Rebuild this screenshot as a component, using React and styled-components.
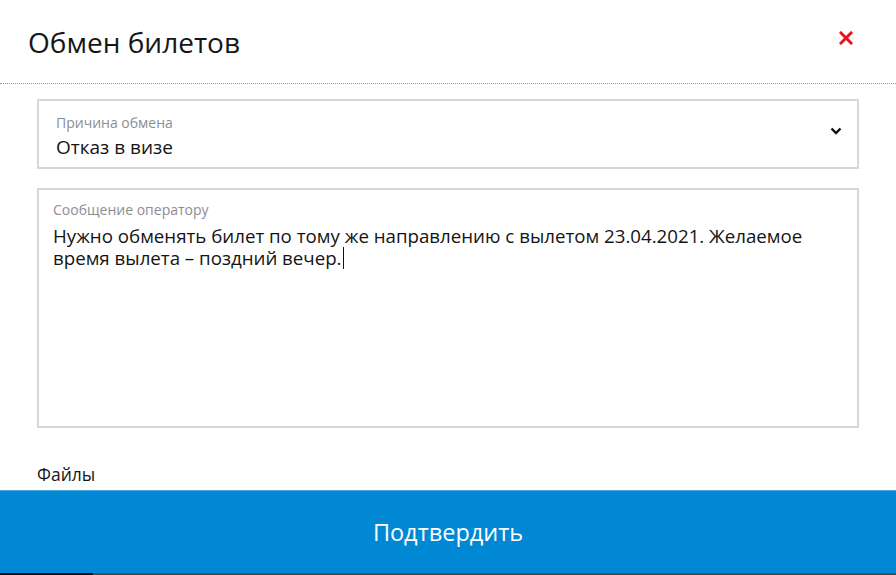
import React from "react";
import styled, { createGlobalStyle } from "styled-components";

const Global = createGlobalStyle`
  html, body { margin: 0; padding: 0; background: #fff; }
  body { font-family: "Open Sans", "Noto Sans", sans-serif; color: #111; }
  * { box-sizing: border-box; }
`;

const Page = styled.div`
  width: 896px;
  height: 575px;
  display: flex;
  flex-direction: column;
  overflow: hidden;
`;

const Header = styled.div`
  height: 85px;
  display: flex;
  align-items: center;
  justify-content: space-between;
  padding: 0 40px 0 28px;
  border-bottom: 1px dotted #9a9a9a;
`;

const Title = styled.h1`
  margin: 0;
  font-size: 28px;
  font-weight: 400;
  color: #161616;
  letter-spacing: 0;
`;

const CloseButton = styled.button`
  border: 0;
  background: none;
  padding: 0;
  width: 20px;
  height: 20px;
  margin-bottom: 8px;
  display: flex;
  align-items: center;
  justify-content: center;
  cursor: pointer;
`;

const Body = styled.div`
  flex: 1;
  padding: 15px 37px 0;
  display: flex;
  flex-direction: column;
`;

const Field = styled.div`
  border: 2px solid #d6d6dc;
  padding: ${(p) => p.$pad};
  height: ${(p) => p.$h}px;
  position: relative;
  margin-bottom: ${(p) => p.$mb}px;
`;

const FieldLabel = styled.div`
  font-size: 14px;
  color: #8d8d94;
  line-height: 18px;
`;

const FieldValue = styled.div`
  font-size: ${(p) => p.$fs}px;
  color: #141414;
  line-height: 22px;
  margin-top: ${(p) => p.$mt || 0}px;
`;

const Caret = styled.span`
  display: inline-block;
  width: 1px;
  height: 22px;
  background: #111;
  vertical-align: top;
  margin-left: 1px;
`;

const Chevron = styled.div`
  position: absolute;
  right: 15px;
  top: 26px;
  line-height: 0;
  svg { display: block; }
`;

const FilesLabel = styled.div`
  font-size: 17.5px;
  color: #161616;
  margin-top: 35px;
  line-height: 22px;
`;

const Submit = styled.button`
  border: 0;
  border-top: 1px solid #4aa8e0;
  height: 84px;
  width: 100%;
  background: #0088d4;
  color: #fff;
  font-family: "Open Sans", "Noto Sans", sans-serif;
  font-size: 23.5px;
  font-weight: 400;
  margin-top: 5px;
  cursor: pointer;
  padding: 0;
`;

const BottomStrip = styled.div`
  height: 2px;
  display: flex;
`;

const StripPart = styled.div`
  background: ${(p) => p.$c};
  width: ${(p) => p.$w};
  flex: ${(p) => (p.$grow ? 1 : "none")};
`;

export default function App() {
  return (
    <Page>
      <Global />
      <Header>
        <Title>Обмен билетов</Title>
        <CloseButton aria-label="close">
          <svg width="14" height="14" viewBox="0 0 14 14">
            <path d="M2 2 L12 12 M12 2 L2 12" stroke="#e8141b" strokeWidth="3" strokeLinecap="square" />
          </svg>
        </CloseButton>
      </Header>
      <Body>
        <Field $pad="13px 16px 0 17px" $h={70} $mb={19}>
          <FieldLabel>Причина обмена</FieldLabel>
          <FieldValue $fs={19} $mt={4}>Отказ в визе</FieldValue>
          <Chevron>
            <svg width="12" height="8" viewBox="0 0 12 8">
              <path d="M1.5 1.5 L6 6 L10.5 1.5" stroke="#111" strokeWidth="2.4" fill="none" />
            </svg>
          </Chevron>
        </Field>
        <Field $pad="11px 16px 0 14px" $h={240} $mb={0}>
          <FieldLabel>Сообщение оператору</FieldLabel>
          <FieldValue $fs={18.7} $mt={6}>
            Нужно обменять билет по тому же направлению с вылетом 23.04.2021. Желаемое время вылета – поздний вечер.
            <Caret />
          </FieldValue>
        </Field>
        <FilesLabel>Файлы</FilesLabel>
      </Body>
      <Submit>Подтвердить</Submit>
      <BottomStrip>
        <StripPart $c="#0d0d0d" $w="93px" />
        <StripPart $c="#4a4a4a" $grow />
      </BottomStrip>
    </Page>
  );
}
